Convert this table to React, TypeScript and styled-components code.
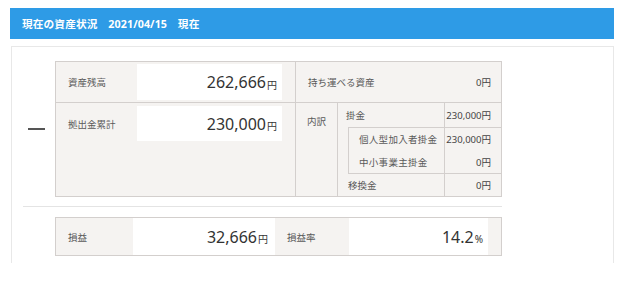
import React from "react"
import styled, { createGlobalStyle } from "styled-components"

const GlobalStyle = createGlobalStyle`
  html, body {
    margin: 0;
    padding: 0;
    background: #fff;
  }
  body {
    font-family: "Noto Sans", "Noto Sans CJK JP", sans-serif;
    color: #555;
  }
`

const Page = styled.div`
  width: 604px;
  padding: 8px 0 0 10px;
`

const Heading = styled.h2`
  margin: 0;
  height: 31px;
  display: flex;
  align-items: center;
  padding-left: 12px;
  background: #2e9be6;
  color: #fff;
  font-size: 10.7px;
  font-weight: 700;
  letter-spacing: 0.1px;
`

const Panel = styled.section`
  box-sizing: border-box;
  margin: 7px 0 0 1px;
  width: 603px;
  height: 217px;
  border: 1px solid #e8e8e8;
  border-bottom: none;
  padding-left: 11px;
`

const Block = styled.div<{ $divider?: boolean }>`
  width: 447px;
  display: flex;
  align-items: center;
  padding: ${p => (p.$divider ? "14px 0 9px 32px" : "10px 0 0 32px")};
  border-bottom: ${p => (p.$divider ? "1px solid #e4e4e4" : "none")};
  position: relative;
`

const Minus = styled.span`
  position: absolute;
  left: 5px;
  width: 17px;
  height: 2px;
  background: #555;
`

const Table = styled.div`
  flex: 1;
  display: flex;
  border: 1px solid #d3cfcd;
  background: #f5f3f1;
`

const Pane = styled.div<{ $width?: number }>`
  display: flex;
  flex-direction: column;
  width: ${p => (p.$width ? `${p.$width}px` : "auto")};
  flex: ${p => (p.$width ? "none" : "1")};
  border-right: ${p => (p.$width ? "1px solid #d3cfcd" : "none")};
`

const Row = styled.div<{ $height?: number; $last?: boolean }>`
  display: flex;
  height: ${p => (p.$height ? `${p.$height}px` : "auto")};
  flex: ${p => (p.$last ? "1" : "none")};
  border-bottom: ${p => (p.$last ? "none" : "1px solid #d3cfcd")};
`

const Line = styled.div<{ $top: number; $height: number }>`
  display: flex;
  align-items: center;
  height: ${p => p.$height}px;
  margin-top: ${p => p.$top}px;
`

const Label = styled.div<{ $width: number }>`
  width: ${p => p.$width}px;
  padding-left: 12px;
  box-sizing: border-box;
  font-size: 9.5px;
  color: #5a5a5a;
  flex: none;
`

const Amount = styled.div<{ $width: number }>`
  width: ${p => p.$width}px;
  height: 100%;
  box-sizing: border-box;
  background: #fff;
  display: flex;
  align-items: center;
  justify-content: flex-end;
  padding-right: 5px;
  font-size: 16px;
  color: #333;
  flex: none;
`

const Unit = styled.small`
  font-size: 10px;
  margin-left: 1px;
  margin-top: 4px;
`

const PlainRow = styled.div`
  flex: 1;
  display: flex;
  align-items: center;
  justify-content: space-between;
  padding: 0 10px 0 12px;
  font-size: 9.5px;
  color: #5a5a5a;
`

const SmallValue = styled.span`
  font-size: 9.5px;
  color: #444;
`

const Breakdown = styled.div`
  width: 41px;
  flex: none;
  border-right: 1px solid #d3cfcd;
  text-align: center;
  padding-top: 11px;
  font-size: 9.5px;
  color: #5a5a5a;
`

const Detail = styled.div`
  flex: 1;
  display: flex;
  flex-direction: column;
`

const Item = styled.div<{ $height: number; $indent: number; $spaced?: boolean }>`
  display: grid;
  grid-template-columns: 1fr 57px;
  height: ${p => p.$height}px;
  font-size: 9.5px;
  color: #5a5a5a;

  & > span:first-child {
    display: flex;
    align-items: center;
    padding-left: ${p => p.$indent}px;
    letter-spacing: ${p => (p.$spaced ? "0.3px" : "0")};
  }
  & > span:last-child {
    display: flex;
    align-items: center;
    justify-content: flex-end;
    padding-right: 10px;
    border-left: 1px solid #d3cfcd;
    color: #444;
  }
`

const Nested = styled.div`
  margin-left: 10px;
  border-left: 1px solid #d3cfcd;
  border-top: 1px solid #d3cfcd;
  border-bottom: 1px solid #d3cfcd;
`

const ResultTable = styled.div`
  flex: 1;
  display: grid;
  grid-template-columns: 77px 142px 74px 139px 1fr;
  height: 37px;
  border: 1px solid #d3cfcd;
  background: #f5f3f1;
  align-items: center;
`

const ResultLabel = styled.div`
  padding-left: 12px;
  font-size: 9.5px;
  color: #5a5a5a;
`

const ResultValue = styled.div<{ $pad: number }>`
  height: 100%;
  background: #fff;
  display: flex;
  align-items: center;
  justify-content: flex-end;
  padding-right: ${p => p.$pad}px;
  font-size: 16px;
  color: #333;
`

const Yen = ({ value }: { value: string }) => (
  <>
    {value}
    <Unit>円</Unit>
  </>
)

const breakdown = [
  { name: "個人型加入者掛金", value: "230,000" },
  { name: "中小事業主掛金", value: "0" },
]

export default function App() {
  return (
    <>
      <GlobalStyle />
      <Page>
        <Heading>現在の資産状況　2021/04/15　現在</Heading>
        <Panel>
          <Block $divider>
            <Minus />
            <Table>
              <Pane $width={239}>
                <Row $height={40}>
                  <Line $top={2} $height={36}>
                    <Label $width={81}>資産残高</Label>
                    <Amount $width={145}>
                      <Yen value="262,666" />
                    </Amount>
                  </Line>
                </Row>
                <Row $last>
                  <Line $top={3} $height={35}>
                    <Label $width={81}>拠出金累計</Label>
                    <Amount $width={145}>
                      <Yen value="230,000" />
                    </Amount>
                  </Line>
                </Row>
              </Pane>
              <Pane>
                <Row $height={40}>
                  <PlainRow>
                    <span>持ち運べる資産</span>
                    <SmallValue>0円</SmallValue>
                  </PlainRow>
                </Row>
                <Row $last>
                  <Breakdown>内訳</Breakdown>
                  <Detail>
                    <Item $height={24} $indent={8}>
                      <span>掛金</span>
                      <span>230,000円</span>
                    </Item>
                    <Nested>
                      {breakdown.map(b => (
                        <Item key={b.name} $height={22.5} $indent={10} $spaced>
                          <span>{b.name}</span>
                          <span>{b.value}円</span>
                        </Item>
                      ))}
                    </Nested>
                    <Item $height={22} $indent={10}>
                      <span>移換金</span>
                      <span>0円</span>
                    </Item>
                  </Detail>
                </Row>
              </Pane>
            </Table>
          </Block>
          <Block>
            <ResultTable>
              <ResultLabel>損益</ResultLabel>
              <ResultValue $pad={7}>
                <Yen value="32,666" />
              </ResultValue>
              <ResultLabel>損益率</ResultLabel>
              <ResultValue $pad={5}>
                14.2<Unit>%</Unit>
              </ResultValue>
              <span />
            </ResultTable>
          </Block>
        </Panel>
      </Page>
    </>
  )
}
